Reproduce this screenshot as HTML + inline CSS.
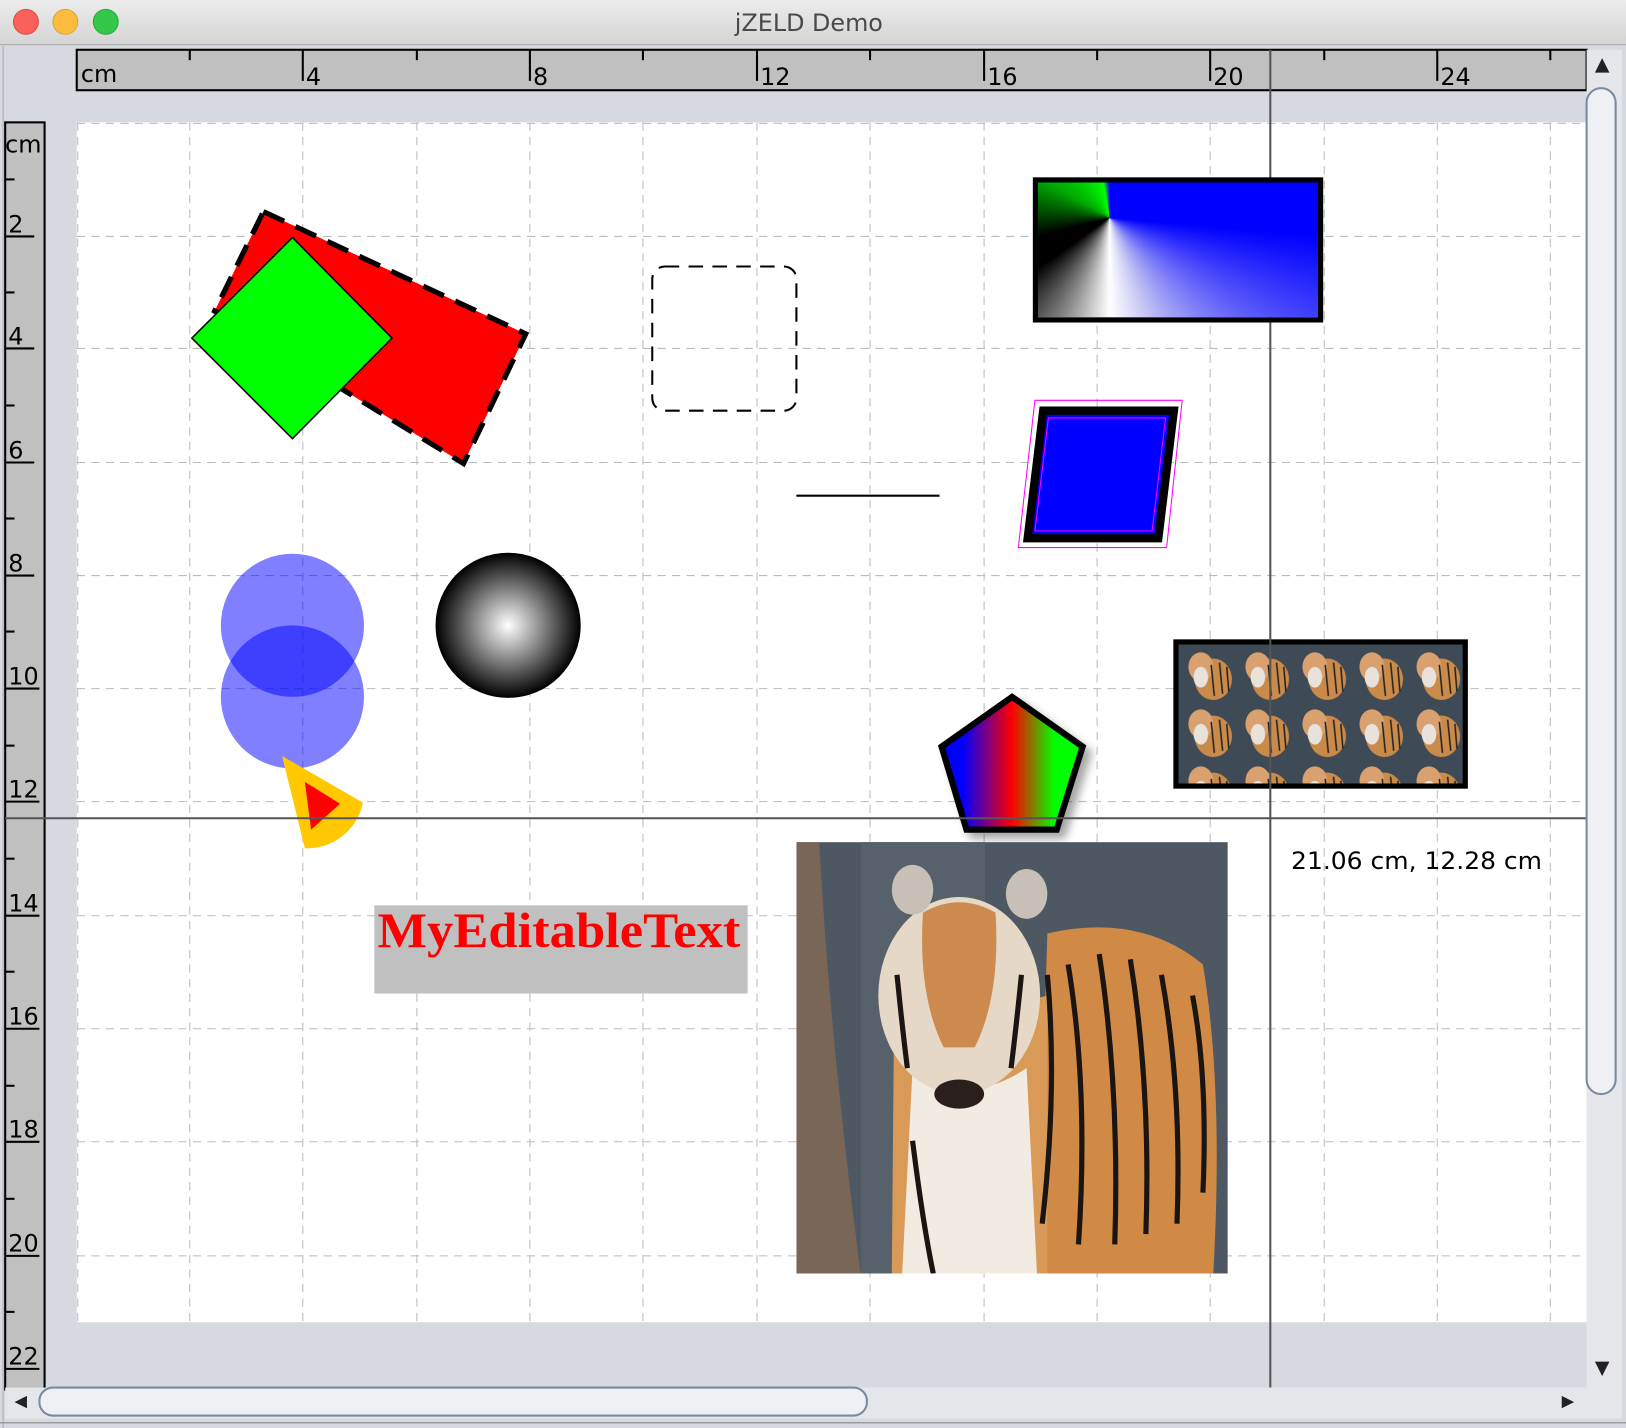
<!DOCTYPE html>
<html><head><meta charset="utf-8"><style>
html,body{margin:0;padding:0;width:1626px;height:1428px;overflow:hidden;background:#d6d9e0}
#w{position:absolute;left:0;top:0;width:1568px;height:1377px;transform:scale(1.03699,1.03704);transform-origin:0 0}
svg{position:absolute;left:0;top:0}
#grad{position:absolute;left:996px;top:171px;width:270px;height:130px;border:5px solid #000;
background:conic-gradient(from 0deg at 69px 34px,#00f 0deg,#00f 95deg,#c8c8f4 160deg,#fff 180deg,#888 205deg,#000 235deg,#000 255deg,#0a0 300deg,#0f0 350deg,#00f 360deg)}
</style></head><body><div id="w">
<svg width="1568" height="1377" viewBox="0 0 1568 1377" font-family="DejaVu Sans, Liberation Sans, sans-serif">
<defs>
<linearGradient id="tb" x1="0" y1="0" x2="0" y2="1"><stop offset="0" stop-color="#ececec"/><stop offset="1" stop-color="#d4d4d4"/></linearGradient>
<radialGradient id="sph"><stop offset="0" stop-color="#fff"/><stop offset="1" stop-color="#000"/></radialGradient>
<linearGradient id="pg" x1="0" y1="0" x2="1" y2="0"><stop offset="0.15" stop-color="#00f"/><stop offset="0.5" stop-color="#f00"/><stop offset="0.8" stop-color="#0f0"/></linearGradient>
<pattern id="tile" x="1136" y="621" width="55" height="55" patternUnits="userSpaceOnUse">
<rect width="55" height="55" fill="#3e4a55"/>
<ellipse cx="34" cy="34" rx="18" ry="20" fill="#c98a4a"/>
<ellipse cx="22" cy="22" rx="12" ry="14" fill="#d9a070"/>
<ellipse cx="22" cy="32" rx="7" ry="10" fill="#e8e2da"/>
<path d="M32 20 L35 50 M40 18 L43 48 M47 22 L49 46" stroke="#222" stroke-width="1.5"/>
</pattern>
<clipPath id="tc"><rect x="768" y="812" width="416" height="416"/></clipPath>
<filter id="sh"><feDropShadow dx="6" dy="6" stdDeviation="4" flood-color="#000" flood-opacity="0.35"/></filter>
</defs>
<rect x="0" y="0" width="1568" height="43" fill="url(#tb)"/>
<line x1="0" y1="43" x2="1568" y2="43" stroke="#aaa"/>
<circle cx="25" cy="21" r="12" fill="#fc605b" stroke="#de4a45"/>
<circle cx="63" cy="21" r="12" fill="#fdbc40" stroke="#dea236"/>
<circle cx="102" cy="21" r="12" fill="#34c84a" stroke="#27aa36"/>
<text x="780" y="30" text-anchor="middle" font-size="23" fill="#4a4a4a">jZELD Demo</text>
<line x1="3" y1="44" x2="3" y2="1377" stroke="#aaa"/>
<rect x="74" y="48" width="1456" height="39" fill="#c0c0c0" stroke="#000" stroke-width="2"/>
<g stroke="#000" stroke-width="2">
<line x1="183" y1="48" x2="183" y2="58"/><line x1="292" y1="48" x2="292" y2="78"/>
<line x1="402" y1="48" x2="402" y2="58"/><line x1="511" y1="48" x2="511" y2="78"/>
<line x1="620" y1="48" x2="620" y2="58"/><line x1="730" y1="48" x2="730" y2="78"/>
<line x1="839" y1="48" x2="839" y2="58"/><line x1="949" y1="48" x2="949" y2="78"/>
<line x1="1058" y1="48" x2="1058" y2="58"/><line x1="1167" y1="48" x2="1167" y2="78"/>
<line x1="1277" y1="48" x2="1277" y2="58"/><line x1="1386" y1="48" x2="1386" y2="78"/>
<line x1="1495" y1="48" x2="1495" y2="58"/>
</g>
<g font-size="23" fill="#000">
<text x="78" y="79">cm</text><text x="295" y="82">4</text><text x="514" y="82">8</text>
<text x="733" y="82">12</text><text x="952" y="82">16</text><text x="1170" y="82">20</text><text x="1389" y="82">24</text>
</g>
<rect x="5" y="118" width="38" height="1222" fill="#c0c0c0" stroke="#000" stroke-width="2"/>
<g stroke="#000" stroke-width="2">
<line x1="5" y1="173" x2="14" y2="173"/><line x1="5" y1="228" x2="33" y2="228"/>
<line x1="5" y1="282" x2="14" y2="282"/><line x1="5" y1="336" x2="33" y2="336"/>
<line x1="5" y1="391" x2="14" y2="391"/><line x1="5" y1="446" x2="33" y2="446"/>
<line x1="5" y1="500" x2="14" y2="500"/><line x1="5" y1="555" x2="33" y2="555"/>
<line x1="5" y1="609" x2="14" y2="609"/><line x1="5" y1="664" x2="38" y2="664"/>
<line x1="5" y1="719" x2="14" y2="719"/><line x1="5" y1="773" x2="38" y2="773"/>
<line x1="5" y1="828" x2="14" y2="828"/><line x1="5" y1="883" x2="38" y2="883"/>
<line x1="5" y1="937" x2="14" y2="937"/><line x1="5" y1="992" x2="38" y2="992"/>
<line x1="5" y1="1047" x2="14" y2="1047"/><line x1="5" y1="1101" x2="38" y2="1101"/>
<line x1="5" y1="1156" x2="14" y2="1156"/><line x1="5" y1="1211" x2="38" y2="1211"/>
<line x1="5" y1="1265" x2="14" y2="1265"/><line x1="5" y1="1320" x2="38" y2="1320"/>
</g>
<g font-size="23" fill="#000">
<text x="5" y="147">cm</text><text x="8" y="224">2</text><text x="8" y="332">4</text><text x="8" y="442">6</text>
<text x="8" y="551">8</text><text x="8" y="660">10</text><text x="8" y="769">12</text><text x="8" y="879">14</text>
<text x="8" y="988">16</text><text x="8" y="1097">18</text><text x="8" y="1207">20</text><text x="8" y="1316">22</text>
</g>
<rect x="74" y="118" width="1456" height="1157" fill="#fff"/>
<g stroke="#bbb" stroke-width="1" stroke-dasharray="8,6">
<line x1="74" y1="119" x2="1530" y2="119"/>
<line x1="74" y1="228" x2="1530" y2="228"/><line x1="74" y1="336" x2="1530" y2="336"/>
<line x1="74" y1="446" x2="1530" y2="446"/><line x1="74" y1="555" x2="1530" y2="555"/>
<line x1="74" y1="664" x2="1530" y2="664"/><line x1="74" y1="773" x2="1530" y2="773"/>
<line x1="74" y1="883" x2="1530" y2="883"/><line x1="74" y1="992" x2="1530" y2="992"/>
<line x1="74" y1="1101" x2="1530" y2="1101"/><line x1="74" y1="1211" x2="1530" y2="1211"/>
<line x1="75" y1="118" x2="75" y2="1275"/>
<line x1="183" y1="118" x2="183" y2="1275"/><line x1="292" y1="118" x2="292" y2="1275"/>
<line x1="402" y1="118" x2="402" y2="1275"/><line x1="511" y1="118" x2="511" y2="1275"/>
<line x1="620" y1="118" x2="620" y2="1275"/><line x1="730" y1="118" x2="730" y2="1275"/>
<line x1="839" y1="118" x2="839" y2="1275"/><line x1="949" y1="118" x2="949" y2="1275"/>
<line x1="1058" y1="118" x2="1058" y2="1275"/><line x1="1167" y1="118" x2="1167" y2="1275"/>
<line x1="1277" y1="118" x2="1277" y2="1275"/><line x1="1386" y1="118" x2="1386" y2="1275"/>
<line x1="1495" y1="118" x2="1495" y2="1275"/>
</g>
<polygon points="254,204 507,322 447,447 207,300" fill="#f00" stroke="#000" stroke-width="5" stroke-dasharray="22,12"/>
<polygon points="282,229 378,326 282,423 185,326" fill="#0f0" stroke="#000" stroke-width="1.5"/>
<rect x="629" y="257" width="139" height="139" rx="12" fill="none" stroke="#000" stroke-width="2" stroke-dasharray="14,9"/>
<line x1="768" y1="478" x2="906" y2="478" stroke="#000" stroke-width="2"/>
<polygon points="998,386 1140,386 1125,528 982,528" fill="none" stroke="#f0f" stroke-width="1"/>
<polygon points="1006,396 1132,396 1117,519 991,519" fill="#00f" stroke="#000" stroke-width="8"/>
<polygon points="1011,403 1124,403 1111,512 998,512" fill="none" stroke="#f0f" stroke-width="1"/>
<circle cx="282" cy="603" r="69" fill="rgba(0,0,255,0.5)"/>
<circle cx="282" cy="672" r="69" fill="rgba(0,0,255,0.5)"/>
<circle cx="490" cy="603" r="70" fill="url(#sph)"/>
<path d="M272,729 L350,774 A55,55 0 0 1 294,818 Z" fill="#ffc800"/>
<path d="M294,754 L328,775 L300,800 Z" fill="#f00"/>
<polygon points="976,672 1044,720 1019,800 932,800 908,720" fill="url(#pg)" stroke="#000" stroke-width="6" filter="url(#sh)"/>
<rect x="1134" y="619" width="279" height="139" fill="url(#tile)" stroke="#000" stroke-width="5"/>
<g clip-path="url(#tc)">
<rect x="768" y="812" width="416" height="416" fill="#4d5862"/>
<rect x="830" y="812" width="120" height="416" fill="#56616b"/>
<path d="M768,812 L790,812 Q800,1000 830,1228 L768,1228 Z" fill="#7a6657"/>
<path d="M1010,900 Q1100,880 1160,930 Q1180,1050 1170,1228 L1000,1228 Z" fill="#d18a45"/>
<path d="M862,1000 L1010,960 L1010,1228 L860,1228 Z" fill="#d99a58"/>
<path d="M880,1030 Q930,1070 990,1030 L1000,1228 L870,1228 Z" fill="#f1ebe2"/>
<ellipse cx="925" cy="960" rx="78" ry="95" fill="#e6d8c6"/>
<path d="M890,880 Q925,860 960,880 Q965,960 940,1010 L910,1010 Q885,960 890,880 Z" fill="#cc8a4f"/>
<ellipse cx="880" cy="858" rx="20" ry="24" fill="#c8c0b6"/>
<ellipse cx="990" cy="862" rx="20" ry="24" fill="#c8c0b6"/>
<ellipse cx="925" cy="1055" rx="24" ry="14" fill="#2a1f1c"/>
<g stroke="#1b1512" stroke-width="5" fill="none">
<path d="M1030,930 Q1050,1050 1040,1200"/><path d="M1060,920 Q1080,1050 1075,1200"/>
<path d="M1090,925 Q1110,1050 1105,1190"/><path d="M1120,940 Q1140,1050 1135,1180"/>
<path d="M1150,960 Q1165,1040 1160,1150"/><path d="M1010,940 Q1020,1050 1005,1180"/>
<path d="M865,940 Q870,990 875,1030"/><path d="M985,940 Q980,990 975,1030"/>
<path d="M880,1100 Q890,1180 900,1228"/>
</g>
</g>
<rect x="361" y="873" width="360" height="85" fill="#c0c0c0"/>
<text x="364" y="913" font-family="Liberation Serif, serif" font-weight="bold" font-size="48" fill="#f00" textLength="350" lengthAdjust="spacingAndGlyphs">MyEditableText</text>
<line x1="1225" y1="48" x2="1225" y2="1338" stroke="#555" stroke-width="2"/>
<line x1="5" y1="789" x2="1530" y2="789" stroke="#555" stroke-width="2"/>
<text x="1245" y="838" font-size="23" fill="#000" textLength="242" lengthAdjust="spacingAndGlyphs">21.06 cm, 12.28 cm</text>
<rect x="1530" y="48" width="34" height="1290" fill="#e4e6ea"/>
<rect x="1530" y="85" width="28" height="970" rx="14" fill="#eef0f3" stroke="#7a8aa0" stroke-width="2"/>
<path d="M1538,70 L1545,56 L1552,70 Z" fill="#222"/>
<path d="M1538,1313 L1545,1327 L1552,1313 Z" fill="#222"/>
<rect x="5" y="1338" width="1559" height="30" fill="#e4e6ea"/>
<rect x="38" y="1338" width="798" height="27" rx="13" fill="#eef0f3" stroke="#7a8aa0" stroke-width="2"/>
<path d="M26,1346 L14,1352 L26,1358 Z" fill="#222"/>
<path d="M1506,1346 L1518,1352 L1506,1358 Z" fill="#222"/>
<line x1="0" y1="1372" x2="1568" y2="1372" stroke="#888"/>
</svg>
<div id="grad"></div>
</div></body></html>
